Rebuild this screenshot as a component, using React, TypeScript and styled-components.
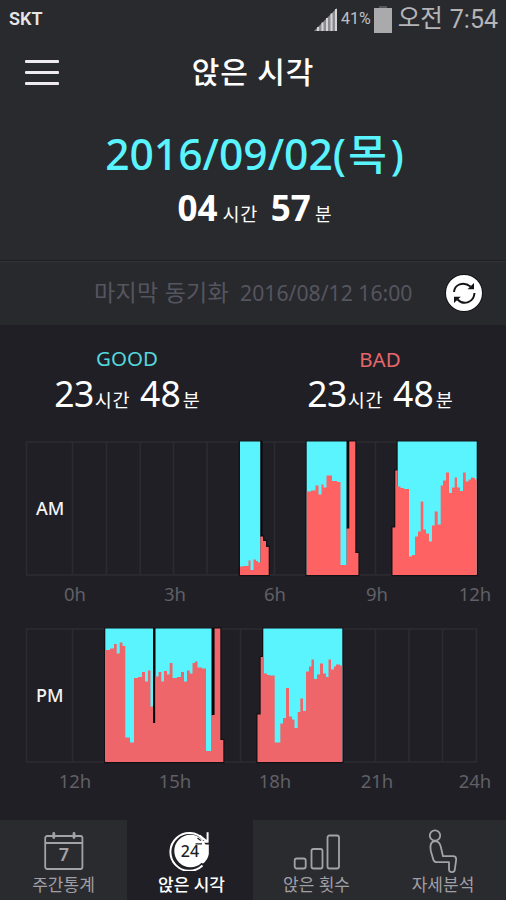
import React from "react";
import styled, { createGlobalStyle } from "styled-components";

const TEAL = "#5af4ff";

const GlobalStyle = createGlobalStyle`
  * { box-sizing: border-box; }
  body {
    margin: 0;
    background: #201f25;
    font-family: "Noto Sans", "Noto Sans CJK KR", sans-serif;
    color: #fff;
  }
`;

const Screen = styled.div`
  width: 506px;
  height: 900px;
  overflow: hidden;
  display: flex;
  flex-direction: column;
  background: #201f25;
`;

const StatusBar = styled.div`
  height: 38px;
  display: flex;
  align-items: center;
  justify-content: space-between;
  padding: 0 8px 0 9px;
  background: #292a2e;
  font-family: Roboto, "Noto Sans CJK KR", sans-serif;
`;

const StatusGroup = styled.div`
  display: flex;
  align-items: center;
`;

const Run = styled.span<{ $size: number; $weight?: number; $color?: string; $ml?: number; $ls?: number }>`
  font-size: ${(p) => p.$size}px;
  font-weight: ${(p) => p.$weight ?? 400};
  color: ${(p) => p.$color ?? "#fff"};
  margin-left: ${(p) => p.$ml ?? 0}px;
  letter-spacing: ${(p) => p.$ls ?? 0}px;
  line-height: 1;
  white-space: pre;
`;

const TitleBar = styled.header`
  height: 70px;
  display: grid;
  grid-template-columns: 168px 1fr 168px;
  align-items: center;
  justify-items: center;
  background: #292a2e;
`;

const MenuButton = styled.button`
  justify-self: start;
  margin: 0 0 1px 25px;
  width: 34px;
  height: 30px;
  padding: 0;
  border: 0;
  background: none;
  display: flex;
  flex-direction: column;
  justify-content: center;
  gap: 8px;
`;

const MenuLine = styled.span`
  height: 3px;
  border-radius: 1px;
  background: #eeeaf0;
`;

const Title = styled.h1`
  margin: 0 0 2px;
  font-size: 30px;
  font-weight: 500;
  letter-spacing: 0.9px;
  line-height: 1;
  white-space: nowrap;
`;

const Summary = styled.section`
  height: 152px;
  padding: 24px 0 0 3px;
  background: #292a2e;
  display: flex;
  flex-direction: column;
  align-items: center;
`;

const Line = styled.div<{ $h: number }>`
  height: ${(p) => p.$h}px;
  display: flex;
  align-items: baseline;
  justify-content: center;
`;

const SyncBar = styled.section`
  height: 65px;
  border-top: 1px solid #1d1d22;
  box-shadow: inset 0 1px 0 #34353a;
  background: #28292d;
  display: flex;
  align-items: center;
  padding: 0 24px 0 94px;
  justify-content: space-between;
`;

const SyncText = styled.div`
  display: flex;
  align-items: baseline;
  margin-bottom: 1px;
`;

const SyncButton = styled.button`
  width: 36px;
  height: 36px;
  padding: 0;
  border: 0;
  border-radius: 50%;
  background: #fff;
  box-shadow: 0 0 0 1px #111116;
`;

const Scores = styled.section`
  height: 113px;
  display: grid;
  grid-template-columns: 1fr 1fr;
`;

const Score = styled.div`
  padding: 23px 0 0 1px;
  height: 113px;
  display: flex;
  flex-direction: column;
  align-items: center;
`;

const ScoreName = styled.span<{ $color: string; $drop?: number }>`
  height: 28px;
  padding-top: ${(p) => p.$drop ?? 0}px;
  font-size: 20.5px;
  line-height: 21px;
  color: ${(p) => p.$color};
`;

const ChartPanel = styled.section<{ $h: number }>`
  height: ${(p) => p.$h}px;
  padding-left: 24px;
`;

const Graph = styled.svg`
  display: block;
`;

const Axis = styled.div`
  display: grid;
  grid-template-columns: repeat(5, 100px);
  margin-left: 1px;
  margin-top: 6px;
`;

const Tick = styled.span<{ $shift?: number }>`
  padding-left: ${(p) => p.$shift ?? 0}px;
  text-align: center;
  font-size: 18.5px;
  line-height: 20px;
  color: #606066;
`;

const Nav = styled.nav`
  height: 80px;
  display: grid;
  grid-template-columns: 127px 126px 127px 126px;
`;

const Tab = styled.button<{ $active?: boolean }>`
  border: 0;
  padding: 9px 0 0;
  display: flex;
  flex-direction: column;
  align-items: center;
  font-family: inherit;
  background: ${(p) => (p.$active ? "#201f25" : "#2a2b2f")};
`;

const TabLabel = styled.span<{ $active?: boolean }>`
  font-size: 17px;
  line-height: 20px;
  margin-top: 4px;
  padding-left: ${(p) => (p.$active ? 3 : 0)}px;
  font-weight: ${(p) => (p.$active ? 500 : 400)};
  color: ${(p) => (p.$active ? "#fff" : "#a09fa5")};
  white-space: nowrap;
`;

type Step = [number, number];
type Block = {
  good: [number, number][];
  gaps: [number, number, number][];
  bad: Step[];
  end: number;
};

const amBlocks: Block[] = [
  {
    good: [[240, 260.5]],
    gaps: [[260.5, 262.5, 95]],
    bad: [[240, 125], [243, 124.5], [248.5, 119], [250.5, 128.5], [253.5, 118], [256, 119.5], [258, 121], [260.5, 95], [263, 99.5], [266, 105.5]],
    end: 268.7,
  },
  {
    good: [[306.7, 346.7]],
    gaps: [[346.7, 349.3, 87]],
    bad: [[306.7, 50], [311, 49], [315.5, 44], [318.5, 53], [321.5, 43], [323.5, 46], [326.5, 34], [332, 39.5], [337, 40.5], [340.5, 123.5], [346.7, 87], [349.3, 0], [355.3, 111.5]],
    end: 358.4,
  },
  {
    good: [[397.7, 476.7]],
    gaps: [[395.3, 397.7, 29]],
    bad: [[392.5, 86], [395.3, 29], [397.7, 45], [400.5, 46.5], [404, 47.5], [409, 115], [412, 113.5], [415, 95], [418, 90], [420.7, 60], [423.3, 88], [426, 92], [429, 100], [432, 84], [434.7, 70], [437.7, 83], [440.7, 44], [443, 39], [446, 31], [449, 51.5], [452, 46], [454.7, 36], [457, 46], [460, 49.5], [463, 31], [465.7, 40], [468.5, 38], [471, 36], [473, 36.5], [475, 38]],
    end: 476.7,
  },
];

const pmBlocks: Block[] = [
  {
    good: [[105.3, 211.7]],
    gaps: [[153, 155.5, 94.5], [211.7, 214.6, 86.5]],
    bad: [[105.3, 21.5], [110, 20], [114, 15.5], [116.7, 25], [119.7, 14], [122.5, 17.5], [125.3, 109], [130, 114], [134, 49.5], [138, 48.5], [142, 43.5], [145, 53], [148, 42], [150.5, 78], [153, 94.5], [155.5, 48], [158.5, 43.5], [161.3, 53], [164, 42.5], [167, 46], [169.7, 34.5], [172.5, 49.5], [177, 48.5], [181, 43.5], [184, 53], [187, 42], [189.7, 45], [192.5, 34.5], [195, 33], [197.5, 39], [202, 40], [206, 122.5], [211.7, 86.5], [214.6, 0], [220.3, 111.5]],
    end: 223.3,
  },
  {
    good: [[263.3, 342.3]],
    gaps: [[260.7, 263.3, 28.5]],
    bad: [[257.5, 86], [260.7, 28.5], [263.3, 45], [267, 46.5], [270, 47], [274.7, 114], [280.3, 95], [283, 89.5], [286, 59.5], [289, 88], [292, 91], [294.5, 99.5], [297.7, 83.5], [300.3, 70], [303, 82.5], [306, 43], [309, 38], [311.5, 31], [314, 50.5], [317, 46], [320, 35], [323, 45], [326, 48.5], [328.5, 31], [331, 41], [334, 38], [336, 36], [340, 37]],
    end: 342.3,
  },
];

const gridX = [72.5, 106.5, 140.2, 173.5, 207, 240.5, 274.5, 308, 341.5, 375.5, 409, 442.5];

const stepPath = (b: Block) => {
  let d = `M${b.bad[0][0]} 133.5`;
  b.bad.forEach(([x, y], i) => {
    d += `V${y}H${i + 1 < b.bad.length ? b.bad[i + 1][0] : b.end}`;
  });
  return d + "V133.5Z";
};

const Chart = ({ label, blocks, red }: { label: string; blocks: Block[]; red: string }) => (
  <Graph width="456" height="140" viewBox="24 -3.5 456 140" aria-label={label}>
    <g stroke="#2c2c30" strokeWidth="1.6" fill="none">
      <rect x="26.5" y="0.5" width="450" height="133" />
      {gridX.map((x) => (
        <path key={x} d={`M${x} 1V133`} />
      ))}
    </g>
    {blocks.map((b) => (
      <g key={b.end}>
        <path d={stepPath(b)} fill="#0b0b0e" stroke="#121216" strokeWidth="2.4" />
        {b.good.map(([x1, x2]) => (
          <React.Fragment key={x1}>
            <rect x={x1 - 1.2} y="-0.8" width={x2 - x1 + 2.4} height="135" fill="#121216" />
            <rect x={x1} y="0" width={x2 - x1} height="133" fill={TEAL} />
          </React.Fragment>
        ))}
        {b.gaps.map(([x1, x2, y]) =>
          x1 > b.good[0][0] ? <rect key={x1} x={x1} y="-0.5" width={x2 - x1} height={y + 1} fill="#07070a" /> : null
        )}
        <path d={stepPath(b)} fill={red} />
      </g>
    ))}
    <text x="36" y="73" fontSize="18" fontWeight="500" fill="#f4f4f4">
      {label}
    </text>
  </Graph>
);

const SignalIcon = () => (
  <svg width="23" height="23" viewBox="0 0 23 23">
    <path d="M0 23L23 0V23Z" fill="#8c8c8f" />
    <path d="M4 23V19M8.5 23V14.5M13 23V10M17.5 23V5.5M22 23V1" stroke="#d4d4d6" strokeWidth="2" />
  </svg>
);

const BatteryIcon = () => (
  <svg width="18" height="27" viewBox="0 0 18 27">
    <path d="M5 0H13V2H18V27H0V2H5Z" fill="#aaa9ac" />
    <path d="M5 0H13V2H5Z" fill="#55555a" />
  </svg>
);

const SyncIcon = () => (
  <svg width="36" height="36" viewBox="0 0 36 36" fill="none" stroke="#151519" strokeWidth="2">
    <path d="M8 17C8.5 10 17 5.5 24.5 11.5" />
    <path d="M28.5 18C28 27 18 31 11.5 24.5" />
    <path d="M28 8V14.3H21.5Z" fill="#151519" stroke="none" />
    <path d="M8 28V21.7H14.8Z" fill="#151519" stroke="none" />
  </svg>
);

const CalendarIcon = () => (
  <svg width="42" height="42" viewBox="0 0 42 42" fill="none" stroke="#a3a2a7" strokeWidth="1.8">
    <rect x="2.2" y="7" width="37.2" height="33" rx="2" />
    <path d="M2.2 14H39.4" />
    <path d="M10.8 4.5V8.5M31 4.5V8.5" strokeWidth="2.8" strokeLinecap="round" />
    <text x="21" y="32" textAnchor="middle" fontSize="18" fontWeight="600" fill="#a3a2a7" stroke="none">7</text>
  </svg>
);

const ClockIcon = () => (
  <svg width="42" height="42" viewBox="0 0 42 42" fill="none">
    <circle cx="21.5" cy="22" r="16.2" fill="#fff" />
    <path d="M33 15.5H39.8V25Q38.8 31 34 34.5L30 33Z" fill="#fff" />
    <path d="M34.5 10.5A18.9 18.9 0 1 0 33.5 36.5" stroke="#fff" strokeWidth="2" />
    <path d="M26.5 14.9H33M28.5 9L32 11.8" stroke="#201f25" strokeWidth="1.3" />
    <path d="M28 12.8H38.6V3.2M37.8 12.3L30.5 6.6" stroke="#fff" strokeWidth="2" />
    <text x="21" y="27.6" textAnchor="middle" fontSize="16" fontWeight="500" fill="#201f25">24</text>
  </svg>
);

const BarsIcon = () => (
  <svg width="48" height="42" viewBox="0 0 48 42" fill="none" stroke="#a3a2a7" strokeWidth="1.8">
    <rect x="1.7" y="29.5" width="11" height="10" rx="2" />
    <rect x="18.5" y="20" width="11" height="19.5" rx="2" />
    <rect x="34.5" y="6.5" width="11.5" height="33" rx="2" />
  </svg>
);

const PostureSvg = styled.svg`
  display: block;
  margin-bottom: -4px;
`;

const PostureIcon = () => (
  <PostureSvg width="32" height="46" viewBox="0 0 32 46" fill="none" stroke="#a3a2a7" strokeWidth="1.8" strokeLinejoin="round">
    <circle cx="8" cy="6.5" r="5.2" />
    <path d="M8 12.2C3.5 12.5 2.7 17 3.8 22L6.3 30.5Q7.1 33.2 9.8 33.2H22V40.5Q22.2 43.2 25 43.2Q27.7 43 27.8 40.5L29.2 30.5Q29.2 27.2 26 27.2H16L13.6 17Q12 12.2 8 12.2Z" />
  </PostureSvg>
);

const Duration = () => (
  <Line $h={42}>
    <Run $size={35.5} $ls={-0.5}>23</Run>
    <Run $size={18.5} $ml={1} $ls={0.6}>시간</Run>
    <Run $size={35.5} $ml={10}>48</Run>
    <Run $size={18.5} $ml={2}>분</Run>
  </Line>
);

const ticks = {
  am: [["0h", 0], ["3h", 0], ["6h", 0], ["9h", 4], ["12h", 0]] as [string, number][],
  pm: [["12h", 0], ["15h", 0], ["18h", 0], ["21h", 4], ["24h", 0]] as [string, number][],
};

const Ticks = ({ items }: { items: [string, number][] }) => (
  <Axis>
    {items.map(([t, s]) => (
      <Tick key={t} $shift={s}>{t}</Tick>
    ))}
  </Axis>
);

export default function App() {
  return (
    <Screen>
      <GlobalStyle />
      <StatusBar>
        <Run $size={18} $weight={600} $color="#e6e6e8">SKT</Run>
        <StatusGroup>
          <SignalIcon />
          <Run $size={16} $color="#c0c0c2" $ml={4}>41%</Run>
          <Run $size={1} $ml={3} />
          <BatteryIcon />
          <Run $size={24.5} $color="#b5b5b8" $ml={6}>오전</Run>
          <Run $size={25} $color="#b5b5b8" $ml={7}>7:54</Run>
        </StatusGroup>
      </StatusBar>
      <TitleBar>
        <MenuButton aria-label="menu">
          <MenuLine />
          <MenuLine />
          <MenuLine />
        </MenuButton>
        <Title>앉은 시각</Title>
      </TitleBar>
      <Summary>
        <Line $h={58}>
          <Run $size={42.6} $weight={500} $color={TEAL}>2016/09/02(</Run>
          <Run $size={42} $weight={500} $color={TEAL} $ml={2}>목</Run>
          <Run $size={42} $weight={500} $color={TEAL} $ml={4}>)</Run>
        </Line>
        <Line $h={50}>
          <Run $size={35} $weight={700}>04</Run>
          <Run $size={18.5} $ml={5} $ls={0.6}>시간</Run>
          <Run $size={35} $weight={700} $ml={13}>57</Run>
          <Run $size={18} $ml={4}>분</Run>
        </Line>
      </Summary>
      <SyncBar>
        <SyncText>
          <Run $size={23} $color="#55555f" $ls={0.3}>마지막 동기화</Run>
          <Run $size={21.2} $color="#55555f" $ml={11}>2016/08/12 16:00</Run>
        </SyncText>
        <SyncButton aria-label="sync">
          <SyncIcon />
        </SyncButton>
      </SyncBar>
      <Scores>
        <Score>
          <ScoreName $color="#52d8dc">GOOD</ScoreName>
          <Duration />
        </Score>
        <Score>
          <ScoreName $color="#e5676b" $drop={1}>BAD</ScoreName>
          <Duration />
        </Score>
      </Scores>
      <ChartPanel $h={187}>
        <Chart label="AM" blocks={amBlocks} red="#ff6262" />
        <Ticks items={ticks.am} />
      </ChartPanel>
      <ChartPanel $h={195}>
        <Chart label="PM" blocks={pmBlocks} red="#ee666a" />
        <Ticks items={ticks.pm} />
      </ChartPanel>
      <Nav>
        <Tab>
          <CalendarIcon />
          <TabLabel>주간통계</TabLabel>
        </Tab>
        <Tab $active>
          <ClockIcon />
          <TabLabel $active>앉은 시각</TabLabel>
        </Tab>
        <Tab>
          <BarsIcon />
          <TabLabel>앉은 횟수</TabLabel>
        </Tab>
        <Tab>
          <PostureIcon />
          <TabLabel>자세분석</TabLabel>
        </Tab>
      </Nav>
    </Screen>
  );
}
